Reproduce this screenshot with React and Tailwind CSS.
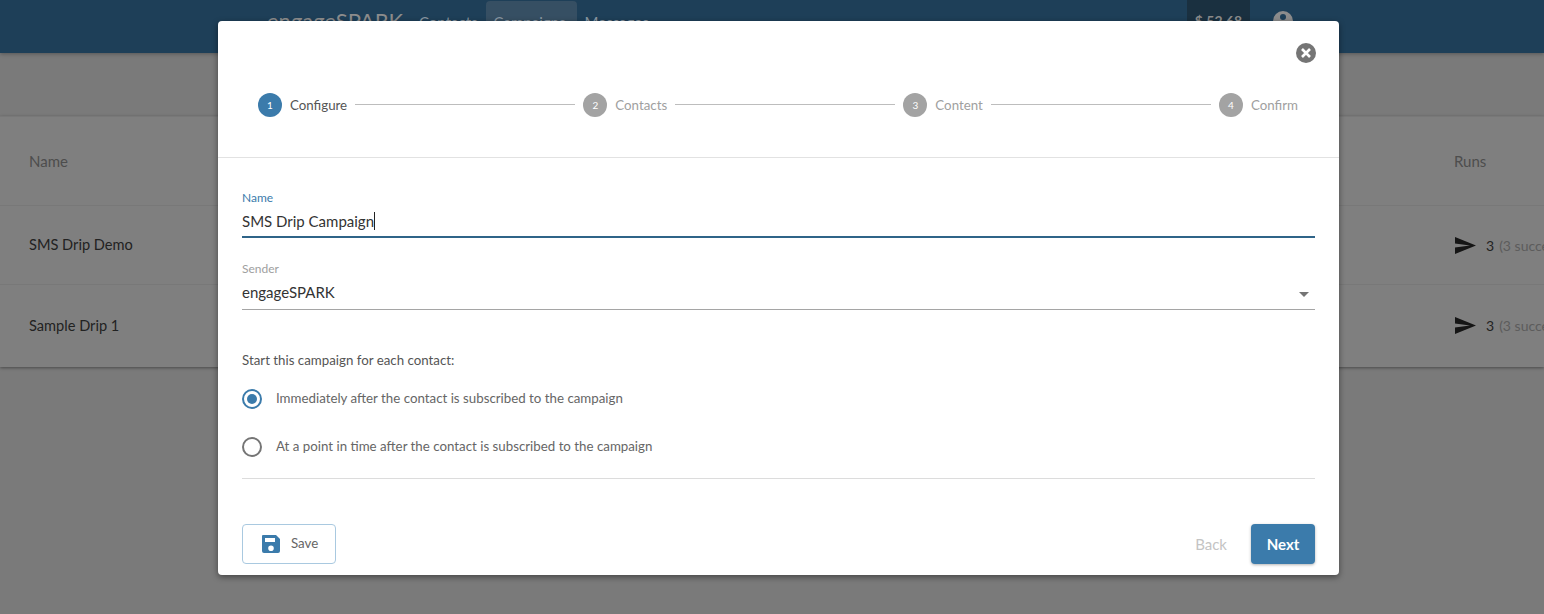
import React from 'react';

const font = { fontFamily: 'Lato, "Noto Sans", sans-serif' };

const steps = [
  { n: 1, label: 'Configure', active: true },
  { n: 2, label: 'Contacts' },
  { n: 3, label: 'Content' },
  { n: 4, label: 'Confirm' },
];

const SendIcon = () => (
  <svg viewBox="0 0 21 17" className="w-[21px] h-[17px] shrink-0 fill-[#151515]">
    <path d="M0 0 L21 8.5 L0 17 L0 10.4 L15 8.5 L0 6.6 Z" />
  </svg>
);

const Row = ({ name, height }) => (
  <div className={`${height} flex items-center justify-between border-b border-[#787878] last:border-b-0 pl-[29px]`}>
    <span className="text-[14.6px] text-[#222]">{name}</span>
    <div className="w-[89px] flex items-center gap-[10px] overflow-hidden whitespace-nowrap">
      <SendIcon />
      <span className="text-[14px] text-[#222]">3</span>
      <span className="text-[14px] text-[#5c5c5c] -ml-[5px]">(3 successful)</span>
    </div>
  </div>
);

const Step = ({ n, label, active }) => (
  <div className="flex items-center gap-2 shrink-0">
    <span className={`w-6 h-6 rounded-full flex items-center justify-center text-[10px] text-white ${active ? 'bg-[#3b7bab]' : 'bg-[#a3a3a3]'}`}>
      {n}
    </span>
    <span className={`text-[13.3px] pt-[2px] ${active ? 'text-[#555]' : 'text-[#a0a0a0]'}`}>{label}</span>
  </div>
);

const Radio = ({ checked, label }) => (
  <div className="flex items-center gap-[14px] h-5">
    <span className={`w-5 h-5 rounded-full border-2 flex items-center justify-center ${checked ? 'border-[#3b7bab]' : 'border-[#757575]'}`}>
      {checked && <span className="w-[10px] h-[10px] rounded-full bg-[#3b7bab]" />}
    </span>
    <span className="text-[13.3px] text-[#666]">{label}</span>
  </div>
);

export default function App() {
  return (
    <div style={font} className="relative w-[1544px] h-[614px] overflow-hidden bg-[#7a7a7a]">
      {/* Page behind the dialog */}
      <header className="h-[53px] bg-[#1e3f58] flex shadow-[0_1px_4px_rgba(0,0,0,0.3)] pl-[267px]">
        <span className="text-[22px] text-[#8c8c8c] mt-[4px] w-[135px] whitespace-nowrap">engageSPARK</span>
        <nav className="flex items-start gap-2 ml-[17px] text-[15px] text-[#8a97a2]">
          <span className="pt-[11px]">Contacts</span>
          <span className="w-[91px] h-[40px] mt-[1px] px-2 pt-[10px] rounded bg-[#364f63]">Campaigns</span>
          <span className="pt-[11px]">Messages</span>
        </nav>
        <div className="ml-auto flex items-start mr-[249px]">
          <span className="w-[63px] h-[40px] bg-[#1a3040] text-[14px] font-bold text-[#8c8c8c] text-center pt-[10px]">$ 52.68</span>
          <svg viewBox="0 0 24 24" className="w-6 h-6 ml-[21px] mt-[9px] fill-[#8c8c8c]">
            <path fillRule="evenodd" d="M12 2a10 10 0 1 0 0 20 10 10 0 0 0 0-20Zm0 3a3 3 0 1 1 0 6 3 3 0 0 1 0-6Z" />
          </svg>
        </div>
      </header>

      <div className="mt-[63px] bg-[#7f7f7f] h-[251px] border-t border-[#787878] shadow-[0_1px_3px_rgba(0,0,0,0.4)]">
        <div className="h-[89px] flex items-center justify-between border-b border-[#787878] pl-[29px]">
          <span className="text-[15px] text-[#4d4d4d]">Name</span>
          <span className="w-[90px] text-[15px] text-[#4d4d4d]">Runs</span>
        </div>
        <Row name="SMS Drip Demo" height="h-[79px]" />
        <Row name="Sample Drip 1" height="h-[81px]" />
      </div>

      {/* Dialog */}
      <div className="absolute left-[218px] top-[21px] w-[1121px] h-[554px] bg-white rounded shadow-[0_2px_6px_rgba(0,0,0,0.45)] flex flex-col">
        <div className="h-[137px] border-b border-[#e2e2e2] shrink-0 flex flex-col items-stretch">
          <div className="flex justify-end pt-[22px] pr-[23px]">
            <svg viewBox="0 0 20 20" className="w-5 h-5">
              <circle cx="10" cy="10" r="10" fill="#757575" />
              <path d="M6 6 L14 14 M14 6 L6 14" stroke="#fff" strokeWidth="2.6" />
            </svg>
          </div>
          <div className="flex items-center mt-[30px] pl-[40px] pr-[41px]">
            {steps.map((s, i) => (
              <React.Fragment key={s.n}>
                <Step {...s} />
                {i < steps.length - 1 && <span className="flex-1 h-px bg-[#bdbdbd] mx-2 -mt-[1px]" />}
              </React.Fragment>
            ))}
          </div>
        </div>

        <div className="flex-1 flex flex-col px-6 pt-[33px]">
          <label className="text-[12px] leading-[14px] text-[#3b7bab]">Name</label>
          <div className="h-[33px] border-b-2 border-[#2f6488] flex items-center text-[15px] text-[#333] pt-[1px]">
            SMS Drip Campaign<span className="w-px h-[18px] bg-[#222]" />
          </div>

          <label className="text-[12px] leading-[14px] text-[#a0a0a0] mt-[24px]">Sender</label>
          <div className="h-[34px] border-b border-[#a5a5a5] flex items-center justify-between text-[15px] text-[#333]">
            engageSPARK
            <span className="mr-[6px] mt-[3px] w-0 h-0 border-x-[5px] border-x-transparent border-t-[5px] border-t-[#757575]" />
          </div>

          <p className="text-[13.3px] text-[#555] mt-[41px] leading-[18px]">Start this campaign for each contact:</p>
          <div className="mt-[20px] flex flex-col gap-[28px]">
            <Radio checked label="Immediately after the contact is subscribed to the campaign" />
            <Radio label="At a point in time after the contact is subscribed to the campaign" />
          </div>
          <div className="border-b border-[#dcdcdc] mt-[21px]" />

          <div className="flex items-center justify-between mt-[45px]">
            <button className="w-[94px] h-10 pb-[1px] rounded border border-[#a9c9e0] flex items-center gap-[10px] pl-[18px] text-[13.3px] text-[#666]">
              <svg viewBox="0 0 20 20" className="w-5 h-5 fill-[#3b7bab]">
                <path fillRule="evenodd" d="M2 1h13l4 4v12a2 2 0 0 1-2 2H3a2 2 0 0 1-2-2V2a1 1 0 0 1 1-1Zm2 3v4h10V4H4Zm6 7.5a2.8 2.8 0 1 0 0 5.6 2.8 2.8 0 0 0 0-5.6Z" />
              </svg>
              Save
            </button>
            <div className="flex items-center gap-[24px]">
              <span className="text-[15px] text-[#c4c4c4]">Back</span>
              <button className="w-[64px] h-10 rounded bg-[#3b7bab] text-white text-[15px] font-bold shadow-[0_1px_3px_rgba(0,0,0,0.3)]">Next</button>
            </div>
          </div>
        </div>
      </div>
    </div>
  );
}
